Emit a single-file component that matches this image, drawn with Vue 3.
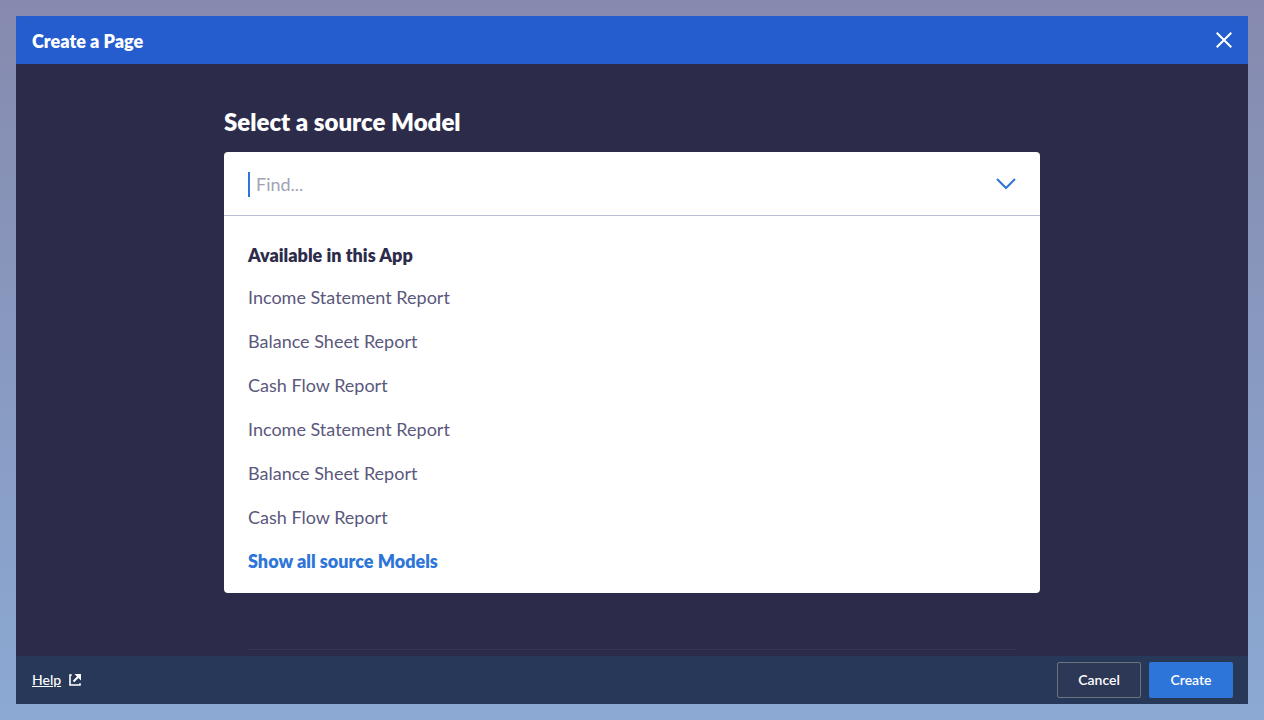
<script setup>
import { ref } from 'vue'

const query = ref('')
const models = [
  'Income Statement Report',
  'Balance Sheet Report',
  'Cash Flow Report',
  'Income Statement Report',
  'Balance Sheet Report',
  'Cash Flow Report',
]
</script>

<template>
  <div class="backdrop">
    <section class="dialog" role="dialog" aria-labelledby="dialog-title">
      <header class="topbar">
        <h1 id="dialog-title" class="title">Create a Page</h1>
        <button class="close" type="button" aria-label="Close">
          <svg width="16" height="16" viewBox="0 0 16 16" fill="none" stroke="#fff" stroke-width="2">
            <path d="M.7.7l14.6 14.6M15.3.7L.7 15.3" />
          </svg>
        </button>
      </header>

      <main class="content">
        <div class="column">
          <label class="heading" for="model-search">Select a source Model</label>
          <div class="panel">
            <div class="search">
              <span class="caret"></span>
              <input id="model-search" v-model="query" class="field" type="text" placeholder="Find..." />
              <button class="toggle" type="button" aria-label="Toggle list">
                <svg width="20" height="12" viewBox="0 0 20 12" fill="none" stroke="#2e75d9" stroke-width="2">
                  <path d="M1 1l9 9 9-9" />
                </svg>
              </button>
            </div>
            <h2 class="group">Available in this App</h2>
            <ul class="list">
              <li v-for="(model, i) in models" :key="i">
                <button class="option" type="button">{{ model }}</button>
              </li>
              <li><button class="option all" type="button">Show all source Models</button></li>
            </ul>
          </div>
          <hr class="rule" />
        </div>
      </main>

      <footer class="footer">
        <a class="help" href="#help">
          <span class="help-text">Help</span>
          <svg width="12" height="12" viewBox="0 0 12 12" fill="none" stroke="#fff" stroke-width="2">
            <path d="M2 1H1v10h10v-1" stroke-linecap="square" stroke-width="1.6" />
            <path d="M4.500 7.500L9.500 2.500" />
            <path d="M5.500 0H12v6.500z" fill="#fff" stroke="none" />
          </svg>
        </a>
        <div class="actions">
          <button class="btn cancel" type="button">Cancel</button>
          <button class="btn create" type="button">Create</button>
        </div>
      </footer>
    </section>
  </div>
</template>

<style>
body {
  background: #8ba8d1;
}
</style>

<style scoped>
.backdrop {
  box-sizing: border-box;
  min-height: 100vh;
  padding: 16px;
  display: flex;
  background: linear-gradient(#868aae, #8ba9d3);
  font-family: Lato, "Liberation Sans", sans-serif;
  font-size: 18px;
  line-height: 24px;
}
button {
  padding: 0;
  border: 0;
  background: none;
  font: inherit;
  cursor: pointer;
}
.dialog {
  flex: 1;
  min-width: 0;
  display: flex;
  flex-direction: column;
  border-radius: 2px 2px 0 0;
  overflow: hidden;
  background: #2d2b4a;
}
.topbar {
  display: flex;
  align-items: center;
  justify-content: space-between;
  height: 48px;
  padding: 0 16px;
  background: #255dcf;
}
.title {
  margin: 0;
  padding-top: 2px;
  font-size: 18px;
  font-weight: 800;
  color: #fff;
}
.close,
.toggle {
  display: flex;
}
.content {
  flex: 1;
  display: flex;
  justify-content: center;
  padding: 40px 24px 0;
}
.column {
  width: 100%;
  max-width: 816px;
}
.heading {
  display: block;
  margin-bottom: 12px;
  font-size: 24px;
  line-height: 36px;
  font-weight: 800;
  color: #fff;
}
.panel {
  padding-bottom: 10px;
  border-radius: 4px;
  background: #fff;
}
.search {
  display: flex;
  align-items: center;
  gap: 6px;
  height: 63px;
  padding: 0 24px;
  border-bottom: 1px solid #b7bcd4;
}
.caret {
  width: 2px;
  height: 25px;
  margin-top: 2px;
  background: #2e75d9;
}
.field {
  flex: 1;
  min-width: 0;
  padding: 0;
  border: 0;
  outline: 0;
  background: none;
  font: inherit;
  color: #2d2b4a;
  caret-color: #2e75d9;
}
.field::placeholder {
  color: #a1a3b5;
  opacity: 1;
}
.group {
  margin: 0;
  padding: 27px 24px 8px;
  font-size: 18px;
  font-weight: 800;
  color: #2d2b4a;
}
.list {
  margin: 0;
  padding: 0;
  list-style: none;
}
.option {
  display: block;
  width: 100%;
  padding: 10px 24px;
  text-align: left;
  color: #5a587c;
}
.all {
  font-weight: 800;
  color: #2e75d9;
}
.rule {
  height: 1px;
  margin: 56px 24px 6px;
  border: 0;
  background: #373553;
}
.footer {
  display: flex;
  align-items: center;
  justify-content: space-between;
  height: 48px;
  padding: 0 15px 0 16px;
  background: #283858;
  font-size: 14px;
}
.help {
  display: flex;
  align-items: center;
  gap: 8px;
  font-weight: 500;
  color: #fff;
  text-decoration: none;
}
.help-text {
  text-decoration: underline;
  text-decoration-thickness: 1px;
  text-underline-offset: 1px;
}
.actions {
  display: flex;
  gap: 8px;
}
.btn {
  width: 84px;
  height: 36px;
  border-radius: 2px;
  font-weight: 600;
  color: #fff;
}
.cancel {
  border: 1px solid #6b7280;
  background: #2d3756;
}
.create {
  background: #2e75d9;
}
</style>
